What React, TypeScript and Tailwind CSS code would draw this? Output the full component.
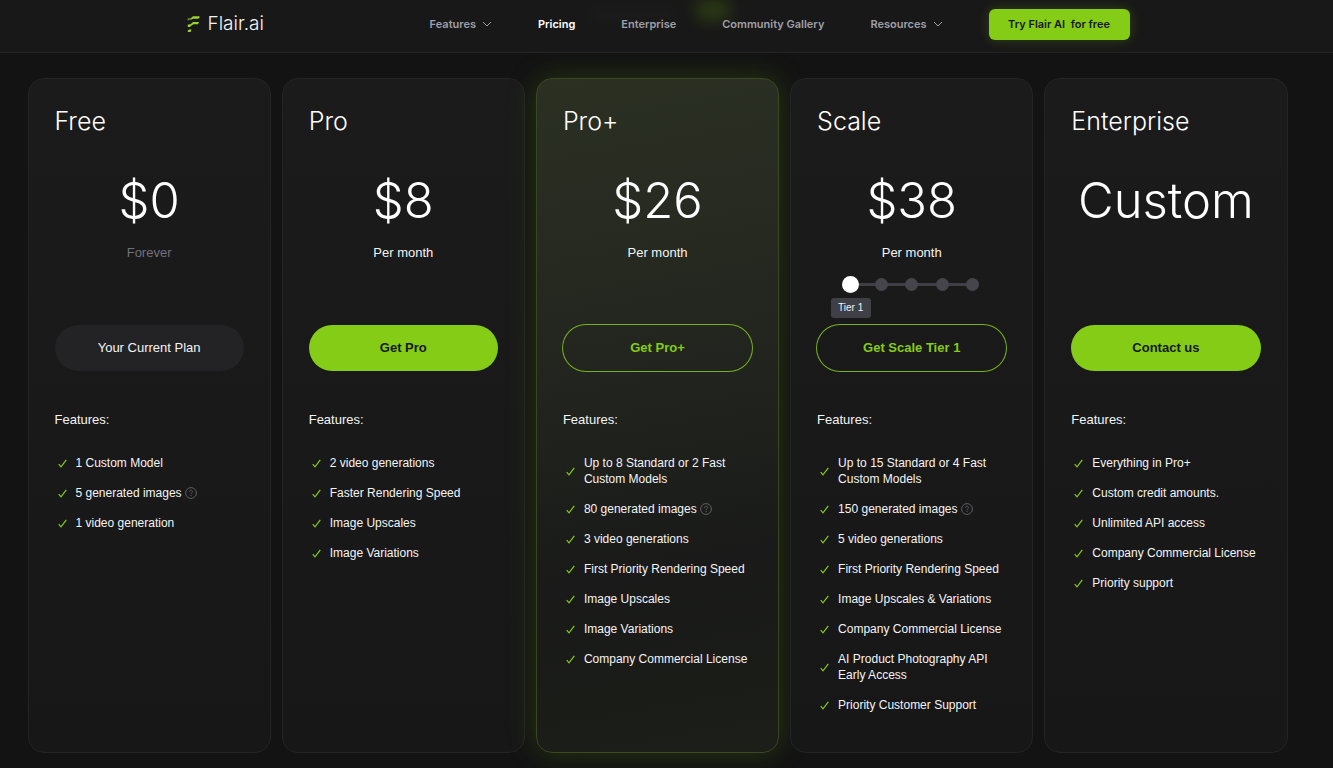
import { useState } from "react";
import { clsx } from "clsx";

type Feature = { text: string; help?: boolean };

type Plan = {
  name: string;
  price: string;
  period?: string;
  cta: string;
  variant: "muted" | "solid" | "outline";
  highlight?: boolean;
  tiers?: boolean;
  features: Feature[];
};

const plans: Plan[] = [
  {
    name: "Free",
    price: "$0",
    period: "Forever",
    cta: "Your Current Plan",
    variant: "muted",
    features: [
      { text: "1 Custom Model" },
      { text: "5 generated images", help: true },
      { text: "1 video generation" },
    ],
  },
  {
    name: "Pro",
    price: "$8",
    period: "Per month",
    cta: "Get Pro",
    variant: "solid",
    features: [
      { text: "2 video generations" },
      { text: "Faster Rendering Speed" },
      { text: "Image Upscales" },
      { text: "Image Variations" },
    ],
  },
  {
    name: "Pro+",
    price: "$26",
    period: "Per month",
    cta: "Get Pro+",
    variant: "outline",
    highlight: true,
    features: [
      { text: "Up to 8 Standard or 2 Fast Custom Models" },
      { text: "80 generated images", help: true },
      { text: "3 video generations" },
      { text: "First Priority Rendering Speed" },
      { text: "Image Upscales" },
      { text: "Image Variations" },
      { text: "Company Commercial License" },
    ],
  },
  {
    name: "Scale",
    price: "$38",
    period: "Per month",
    cta: "Get Scale Tier",
    variant: "outline",
    tiers: true,
    features: [
      { text: "Up to 15 Standard or 4 Fast Custom Models" },
      { text: "150 generated images", help: true },
      { text: "5 video generations" },
      { text: "First Priority Rendering Speed" },
      { text: "Image Upscales & Variations" },
      { text: "Company Commercial License" },
      { text: "AI Product Photography API Early Access" },
      { text: "Priority Customer Support" },
    ],
  },
  {
    name: "Enterprise",
    price: "Custom",
    cta: "Contact us",
    variant: "solid",
    features: [
      { text: "Everything in Pro+" },
      { text: "Custom credit amounts." },
      { text: "Unlimited API access" },
      { text: "Company Commercial License" },
      { text: "Priority support" },
    ],
  },
];

const links = [
  { label: "Features", menu: true },
  { label: "Pricing", active: true },
  { label: "Enterprise" },
  { label: "Community Gallery" },
  { label: "Resources", menu: true },
];

function Logo() {
  return (
    <svg width="13" height="18" viewBox="0 0 13 18" fill="#9ad12f" aria-hidden="true">
      <path d="M3.5 3.4L6 1.2H12.5V3L11 3.700H6L4.500 4.600H1.500L.8 6.200V3.600Z" />
      <path d="M3.500 9.300L6 7H12L11 9.300H6.500L4.500 10.500L3 12H.8V9.500Z" />
      <path d="M.8 15.500L2 14.500H4.600L3.600 17H.8Z" />
    </svg>
  );
}

function Chevron() {
  return (
    <svg width="10" height="10" viewBox="0 0 10 10" fill="none" stroke="currentColor" aria-hidden="true">
      <path d="M1 3L5 7L9 3" />
    </svg>
  );
}

function Check() {
  return (
    <svg className="shrink-0" width="9" height="9" viewBox="0 0 9 9" fill="none" stroke="#84cc16" strokeWidth="1.200" aria-hidden="true">
      <path d="M.7 5.200L3 7.800L8.300 .9" />
    </svg>
  );
}

function Help() {
  return (
    <svg className="ml-[3px] shrink-0" width="12" height="12" viewBox="0 0 12 12" fill="none" stroke="#5c5c63" aria-hidden="true">
      <circle cx="6" cy="6" r="5.400" />
      <path d="M4.500 4.800C4.500 2.800 7.500 2.800 7.500 4.700C7.500 5.800 6 5.900 6 7.100M6 8V9" />
    </svg>
  );
}

function Header() {
  return (
    <header className="relative border-b border-[#242424] bg-[#181818] pr-[17px]">
      <div className="absolute top-0 left-[695px] h-5 w-9 rounded-full bg-lime-500/20 blur-sm" />
      <div className="absolute top-2 left-[585px] h-3 w-24 rounded-full bg-white/2 blur-sm" />
      <div className="relative mx-auto flex h-[52px] max-w-[943px] items-center justify-between pb-1">
        <a href="#" className="flex items-center gap-2 text-[19px] font-light text-zinc-100">
          <Logo />
          Flair.ai
        </a>
        <nav className="flex items-center gap-[46px] text-[11px] font-semibold text-zinc-400">
          {links.map((link) => (
            <a key={link.label} href="#" className={clsx("flex items-center gap-1.5", link.active && "text-white")}>
              {link.label}
              {link.menu && <Chevron />}
            </a>
          ))}
          <button className="h-[31px] w-[141px] rounded-md bg-[#84cc16] text-[11px] font-semibold whitespace-pre text-zinc-900 shadow-[0_0_12px_rgba(132,204,22,0.25)]">
            Try Flair AI  for free
          </button>
        </nav>
      </div>
    </header>
  );
}

function TierPicker({ tier, onChange }: { tier: number; onChange: (tier: number) => void }) {
  return (
    <div role="radiogroup" aria-label="Tier" className="relative mx-auto flex h-[17px] w-[135px] items-center justify-between">
      <div className="absolute inset-x-2 h-[3px] bg-[#3f3f46]" />
      {[1, 2, 3, 4, 5].map((n) => (
        <label key={n} className="relative flex size-[13px] items-center justify-center">
          <input
            type="radio"
            name="tier"
            aria-label={`Tier ${n}`}
            checked={tier === n}
            onChange={() => onChange(n)}
            className="size-[13px] shrink-0 appearance-none rounded-full bg-[#45454b] checked:size-[17px] checked:bg-white"
          />
          {tier === n && (
            <span className="absolute top-5 left-1/2 h-5 w-10 -translate-x-1/2 rounded-[3px] bg-[#3f3f46] text-center text-[10px] leading-5 text-zinc-100">
              Tier {n}
            </span>
          )}
        </label>
      ))}
    </div>
  );
}

function PlanCard({ plan }: { plan: Plan }) {
  const [tier, setTier] = useState(1);

  return (
    <section
      className={clsx(
        "flex flex-1 basis-0 flex-col rounded-2xl border px-[26px] pt-6 pb-[39px] font-['Liberation_Sans',sans-serif]",
        plan.highlight
          ? "border-[#3a4722] bg-[linear-gradient(170deg,#2b3023_0%,#23261f_40%,#191a19_72%,#1c1e18_100%)] shadow-[0_0_28px_rgba(77,124,15,0.35)]"
          : "border-[#242424] bg-linear-to-b from-[#1b1b1b] to-[#171717]"
      )}
    >
      <h2 className="font-['Inter',sans-serif] text-[25px] leading-9 font-light text-white">{plan.name}</h2>
      <p className="mt-9 text-center font-['Inter',sans-serif] text-[49px] leading-[52px] font-light text-white">{plan.price}</p>
      <div className="mt-4 h-[82px]">
        {plan.period && (
          <p className={clsx("mb-[13px] text-center text-[13px] leading-5", plan.name === "Free" ? "text-zinc-500" : "text-zinc-100")}>
            {plan.period}
          </p>
        )}
        {plan.tiers && <TierPicker tier={tier} onChange={setTier} />}
      </div>
      <button
        className={clsx(
          "h-[46px] rounded-full text-[13px]",
          plan.variant === "muted" && "bg-[#232326] text-zinc-100",
          plan.variant === "solid" && "bg-[#84cc16] font-bold text-zinc-900",
          plan.variant === "outline" && "font-bold text-[#84cc16] ring-1 ring-[#77b01e]"
        )}
      >
        {plan.cta}
        {plan.tiers && ` ${tier}`}
      </button>
      <h3 className="mt-[39px] text-[13px] leading-5 text-zinc-100">Features:</h3>
      <ul className="mt-[25px] flex flex-col gap-3.5 pl-[3px] text-xs leading-4 text-zinc-100">
        {plan.features.map((feature) => (
          <li key={feature.text} className="flex items-center gap-[9px]">
            <Check />
            <span className="-mr-2 flex items-center">
              {feature.text}
              {feature.help && <Help />}
            </span>
          </li>
        ))}
      </ul>
    </section>
  );
}

export default function App() {
  return (
    <div className="min-h-screen bg-[#131313] font-['Inter',sans-serif]">
      <Header />
      <div className="pr-[18px]">
        <main className="mx-auto flex max-w-[1260px] items-stretch gap-[11px] pt-[25px] pb-4">
          {plans.map((plan) => (
            <PlanCard key={plan.name} plan={plan} />
          ))}
        </main>
      </div>
    </div>
  );
}
